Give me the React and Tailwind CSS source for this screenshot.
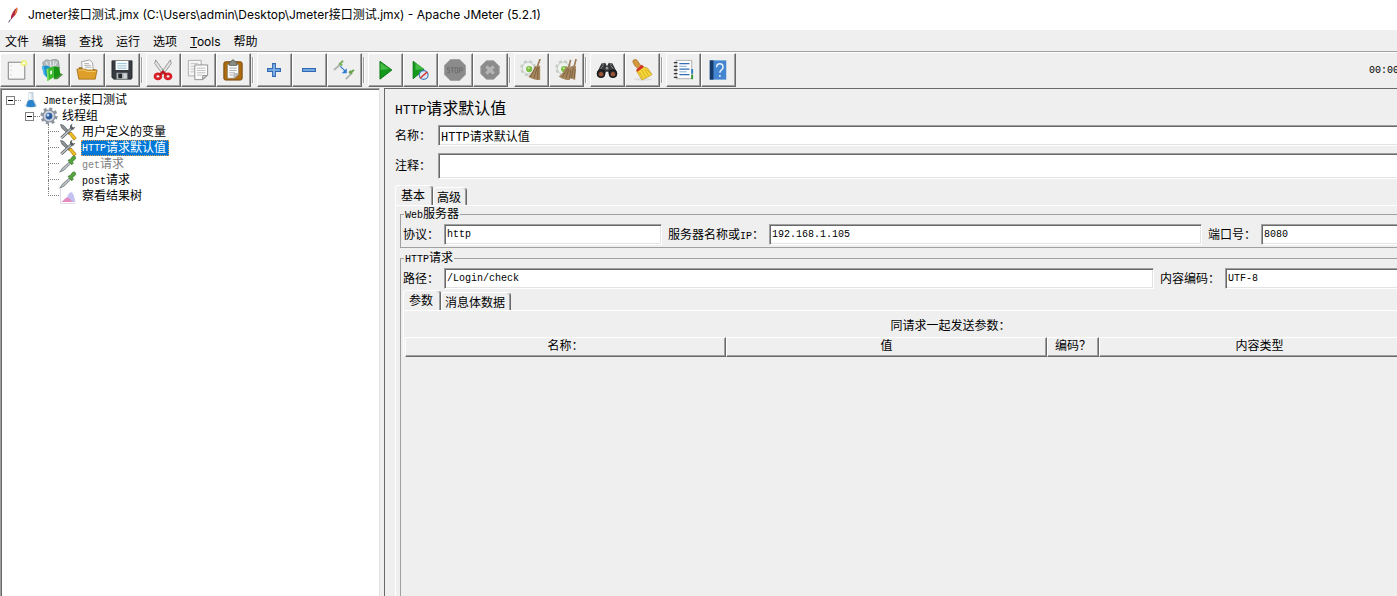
import React from "react";

const mono = "font-['Liberation_Mono','Noto_Sans_CJK_SC',monospace]";

/* Latin runs are set smaller so that two letters take the width of one ideograph. */
function Mixed({ text, large }) {
  return text.split(/([\x20-\x7e]+)/).filter(Boolean).map((part, i) =>
    /^[\x20-\x7e]/.test(part) ? (
      <span key={i} className={large ? `${mono} text-[13px]` : `${mono} text-[10px]`}>{part}</span>
    ) : (
      <span key={i}>{part}</span>
    )
  );
}

const Svg = ({ size = "size-[22px]", children }) => (
  <svg viewBox="0 0 24 24" className={`${size} shrink-0`} fill="none" aria-hidden="true">{children}</svg>
);

const NewIcon = () => (
  <Svg>
    <path d="M2.500 3.500h18v18.500h-18z" fill="#f8f8f8" stroke="#777" />
    <path d="M5.500 7v1M5.500 12v1M5.500 17v1" stroke="#bbb" />
    <circle cx="19.500" cy="4.500" r="3.500" fill="#eef56a" opacity=".8" />
    <circle cx="19.500" cy="4.500" r="1.300" fill="#fff" />
  </Svg>
);
const TemplatesIcon = () => (
  <Svg>
    <path d="M2 4c2-3 5-4 8-2 3-2 7-2 9 0l1 8H3z" fill="#b5bcbe" stroke="#7f8b8c" strokeWidth=".8" />
    <path d="M6 3l2 7M10 2l1 8M14 2l-1 8M17 3l-3 7" stroke="#eef1f1" />
    <path d="M1 8l6-1 3 2v12l-4-1-3-4z" fill="#1f8fd0" />
    <path d="M1 8l2-.5 2 12L3 17z" fill="#4bb8ea" />
    <path d="M20 15l4 2-6 5h-4z" fill="#4a8d3b" />
    <path d="M6 11l8-3v12l-7 4z" fill="#3bbb2b" />
    <path d="M14 8l6 1 1 8-7 5z" fill="#169312" />
    <path d="M6 11l2-.7.500 13L7 24z" fill="#81df64" />
    <path d="M10 13l2-.6v4l-2 .6z" fill="#eafbe5" />
  </Svg>
);
const OpenIcon = () => (
  <Svg>
    <path d="M3 9h6l1 2h11v10H3z" fill="#a86d0c" />
    <path d="M6 3l9-2 3 3 1 9H7z" fill="#fafafa" stroke="#8b8b8b" strokeWidth=".8" />
    <path d="M9 5h5M9 7h7M10 9h7" stroke="#999" strokeWidth=".8" />
    <path d="M1 11h9l2 1h11l-2 10H3z" fill="#dfa02b" stroke="#9b660f" strokeWidth=".8" />
    <path d="M2.500 12h7l2 1.500h10" stroke="#f5cf73" />
  </Svg>
);
const SaveIcon = () => (
  <Svg>
    <path d="M1 2h22v19l-1 1H3l-2-2z" fill="#363b41" stroke="#222" strokeWidth=".8" />
    <path d="M5 2h14v10H5z" fill="#f8fbfd" />
    <path d="M7 5h10M7 7.500h10M7 10h10" stroke="#8ebbd0" />
    <path d="M6 15h12v7H6z" fill="#aeb3b6" />
    <path d="M8 16h4v5H8z" fill="#25292d" />
    <path d="M14 16h3v5h-3z" fill="#d4d7d8" />
  </Svg>
);
const CutIcon = () => (
  <Svg>
    <path d="M4 1l10 14-2 2L3 5zM20 1L10 15l2 2 9-12z" fill="#e5e5e5" stroke="#888" strokeWidth=".9" />
    <ellipse cx="6.500" cy="19" rx="3.200" ry="2.700" stroke="#d81e26" strokeWidth="3" />
    <ellipse cx="17.500" cy="19" rx="3.200" ry="2.700" stroke="#d81e26" strokeWidth="3" />
    <path d="M8.500 17l3.500-3 3.500 3" stroke="#c5131b" strokeWidth="2.500" />
  </Svg>
);
const CopyIcon = () => (
  <Svg>
    <path d="M1.500 1.500h14v17h-14z" fill="#f5f5f5" stroke="#aaa" />
    <path d="M4 5h8M4 8h4M4 11h4M4 14h4" stroke="#c1c1c1" />
    <path d="M8.500 6.500h14v11l-5 5h-9z" fill="#fafafa" stroke="#8b8b8b" />
    <path d="M11 10h9M11 12.500h9M11 15h9M11 17.500h5" stroke="#bbb" />
    <path d="M22 18l-5 4v-4z" fill="#ccc" stroke="#777" strokeWidth=".7" />
  </Svg>
);
const PasteIcon = () => (
  <Svg>
    <rect x="2" y="3" width="20" height="20" rx="2" fill="#ad6b10" stroke="#744407" />
    <path d="M6 6h12v11l-4 4H6z" fill="#fafafa" stroke="#777" strokeWidth=".6" />
    <path d="M8 10h8M8 12.500h8M8 15h6M8 17.500h4" stroke="#aaa" />
    <path d="M18 16l-5 5v-5z" fill="#c8c8c8" stroke="#888" strokeWidth=".6" />
    <path d="M8 3h2l1-2h2l1 2h2v4H8z" fill="#8a8d84" stroke="#55584f" strokeWidth=".8" />
  </Svg>
);
const PlusIcon = () => (
  <Svg><path d="M10.500 5h3v5.500H19v3h-5.500V19h-3v-5.500H5v-3h5.500z" fill="#8dbbed" stroke="#2f69b3" strokeWidth="1.200" /></Svg>
);
const MinusIcon = () => (
  <Svg><path d="M5 10.500h14v3H5z" fill="#8dbbed" stroke="#2f69b3" strokeWidth="1.200" /></Svg>
);
const ToggleIcon = () => (
  <Svg>
    <path d="M1 12l7-6" stroke="#aab2ac" strokeWidth="1.800" />
    <path d="M6.500 6.500L11 2M7 4l3 3" stroke="#7fb166" strokeWidth="2.200" />
    <path d="M14 22l6-6" stroke="#aab2ac" strokeWidth="1.800" />
    <path d="M17.500 15.500L23 12M18 13l3 3" stroke="#6ba351" strokeWidth="2.200" />
    <path d="M8 8l5 5" stroke="#2c7ad2" strokeWidth="1.400" />
    <path d="M15 10v5.500H9.500z" fill="#2c7ad2" />
  </Svg>
);
const Play = ({ d }) => (
  <>
    <path d={d} fill="#15991d" stroke="#087311" />
    <path d="M7 4l10 7-10 1z" fill="#5dce59" opacity=".65" />
  </>
);
const StartIcon = () => <Svg><Play d="M6.500 2.500l13 9.500-13 10z" /></Svg>;
const StartNoPauseIcon = () => (
  <Svg>
    <Play d="M4.500 2.500l12 9-12 10z" />
    <circle cx="16" cy="17.500" r="4.800" fill="#dde6f2" stroke="#4b7dbb" strokeWidth="1.300" />
    <path d="M12 21l8-7" stroke="#d63b34" strokeWidth="1.600" />
  </Svg>
);
const StopIcon = () => (
  <Svg>
    <path d="M7 .5h10L23.500 7v10L17 23.500H7L.5 17V7z" fill="#8b8b8b" stroke="#a0a0a0" />
    <path d="M6 9.500H4v2.500h2V15H3.500M7 9.500h4M9 9.500V15M12 9.500h3V15h-3zM17 15V9.500h3v3h-3" stroke="#6b6b6b" />
  </Svg>
);
const ShutdownIcon = () => (
  <Svg>
    <path d="M8 2h8l6 6v8l-6 6H8l-6-6V8z" fill="#8b8b8b" stroke="#999" />
    <path d="M8 8l8 8M16 8l-8 8" stroke="#b5b5b5" strokeWidth="3.400" />
  </Svg>
);
const Gear = () => (
  <>
    <circle cx="9" cy="10" r="7" stroke="#c6cdc6" strokeWidth="3.500" strokeDasharray="3.200 2.300" />
    <circle cx="9" cy="10" r="6.500" fill="#eef1ee" stroke="#c3c9c3" />
    <circle cx="10" cy="11" r="3.400" fill="#79bd42" />
    <circle cx="9.500" cy="10" r="1.200" fill="#bce78b" />
  </>
);
const ClearIcon = () => (
  <Svg>
    <Gear />
    <path d="M22 0l-3 8" stroke="#9a7955" strokeWidth="1.800" />
    <path d="M16 8l6-1v16c-5 0-9-1-13-4 3-2 6-6 7-11z" fill="#a6875e" />
    <path d="M17 9l-6 11M19 9l-4 12M20 9l-1 13" stroke="#715334" strokeWidth=".8" />
  </Svg>
);
const ClearAllIcon = () => (
  <Svg>
    <Gear />
    <path d="M17 1l-2 8M23 0l-2 8" stroke="#9a7955" strokeWidth="1.800" />
    <path d="M12 8l4 1 4-2 3 1-1 15-5-2-1 2c-4 0-8-1-12-4 4-2 6-6 8-11z" fill="#a6875e" />
    <path d="M14 10L8 20M15 11l-3 10M17 12l-1 9M20 9l-2 12M22 11l-1 10" stroke="#715334" strokeWidth=".8" />
  </Svg>
);
const SearchIcon = () => (
  <Svg>
    <path d="M6 5l4-1 2 4 2-4 4 1 5 10-1 4h-6l-3-5h-2l-3 5H2l-1-4z" fill="#343638" />
    <path d="M7 6l2-1M15 5l2 1M5 11l3-4M19 11l-3-4" stroke="#8e9293" />
    <circle cx="5.500" cy="16" r="4.300" fill="#272727" stroke="#111" />
    <circle cx="18.500" cy="16" r="4.300" fill="#272727" stroke="#111" />
    <circle cx="5.500" cy="16.500" r="2.400" fill="#9d5537" />
    <circle cx="18.500" cy="16.500" r="2.400" fill="#9d5537" />
    <circle cx="12" cy="10" r="1.500" fill="#999" />
  </Svg>
);
const BroomIcon = () => (
  <Svg>
    <ellipse cx="13" cy="22" rx="10" ry="1.500" fill="#ddd" />
    <path d="M2 3c0-3 4-3 5-1l4 6-3 3-4-4z" fill="#d49a3c" stroke="#a4671c" strokeWidth=".8" />
    <path d="M12 8l6 2 5 7-11 6-6-10z" fill="#f4d63b" stroke="#c49a17" strokeWidth=".8" />
    <path d="M12 12l4 8M15 11l4 7M17 11l4 5M9 14l4 7" stroke="#d6ad1c" strokeWidth=".9" />
    <path d="M5.500 12L12 6l2 3-7 5z" fill="#d1332a" />
  </Svg>
);
const FunctionIcon = () => (
  <Svg>
    <path d="M4.500 1.500h17v20h-17z" fill="#fcfcfc" stroke="#aaa" />
    <path d="M8 5h11M8 11h11M8 17h11" stroke="#316eb4" strokeWidth="1.400" />
    <path d="M8 8h8M8 14h8" stroke="#7da6d1" />
    <path d="M2 4h4M2 8h4M2 12h4M2 16h4M2 20h4" stroke="#333" strokeWidth="1.500" />
    <path d="M21 11h2v5h-2z" fill="#287bc7" /><path d="M21 17h2v5h-2z" fill="#2f982d" />
  </Svg>
);
const HelpIcon = () => (
  <Svg>
    <path d="M3 1.500h18v21H3z" fill="#4385d0" />
    <path d="M3 1.500h4v21H3z" fill="#173a68" />
    <path d="M10.500 9c0-5 7-5 7 0 0 3-3.500 3-3.500 6M14 17.500v2" stroke="#e9f3fc" strokeWidth="1.600" />
  </Svg>
);

const toolGroups = [
  [["新建", NewIcon], ["模板", TemplatesIcon], ["打开", OpenIcon], ["保存", SaveIcon]],
  [["剪切", CutIcon], ["复制", CopyIcon], ["粘贴", PasteIcon]],
  [["展开", PlusIcon], ["折叠", MinusIcon], ["切换", ToggleIcon]],
  [["启动", StartIcon], ["不停顿开始", StartNoPauseIcon], ["停止", StopIcon], ["关闭", ShutdownIcon]],
  [["清除", ClearIcon], ["清除全部", ClearAllIcon]],
  [["搜索", SearchIcon], ["重置搜索", BroomIcon]],
  [["函数助手", FunctionIcon], ["帮助", HelpIcon]],
];

function Toolbar() {
  return (
    <div className="flex h-9 items-center border-t border-[#a0a0a0] shadow-[inset_0_1px_0_#fff]">
      {toolGroups.map((group, g) => (
        <div key={g} className="flex">
          {g > 0 && <div className="my-1 ml-px mr-[3px] w-0.5 border-l border-r border-l-[#a0a0a0] border-r-white" />}
          {group.map(([label, Icon]) => (
            <button
              key={label}
              aria-label={label}
              className="flex h-[34px] w-[35px] items-center justify-center border border-b-[#696969] border-l-white border-r-[#696969] border-t-white bg-[#efefef] pr-px pt-px shadow-[inset_-1px_-1px_0_#a0a0a0]"
            >
              <Icon />
            </button>
          ))}
        </div>
      ))}
      <span className={`ml-auto mr-[84px] pt-0.5 ${mono} text-[10px]`}>00:00:00</span>
    </div>
  );
}

const FlaskIcon = () => (
  <Svg size="size-4">
    <path d="M9 1h6v9l5 11c0 2-16 2-16 0l5-11z" fill="#dbe7ef" stroke="#9eb4c2" />
    <path d="M7 14l3-2h5l4 9c-1 2-13 2-14 0z" fill="#2c83cd" />
    <path d="M10 2v9" stroke="#fff" strokeWidth="2" />
  </Svg>
);
const GroupIcon = () => (
  <Svg size="size-[18px]">
    <circle cx="12" cy="12" r="9.500" stroke="#9097a1" strokeWidth="4" strokeDasharray="4 3.460" />
    <circle cx="12" cy="12" r="8" fill="#ccd2dc" stroke="#858d99" strokeWidth="1.500" />
    <circle cx="12" cy="12" r="4.500" fill="#315e9f" />
    <circle cx="10.500" cy="10.500" r="2" fill="#b9d4f3" />
  </Svg>
);
const ToolsIcon = () => (
  <Svg size="size-[18px]">
    <path d="M2 2l4 1 9 10-2 2L4 7z" fill="#8b9195" stroke="#5c6164" />
    <path d="M13 14l3-2 7 8-3 3z" fill="#edbd22" stroke="#a87a10" />
    <path d="M3 20L17 7" stroke="#555b5e" strokeWidth="4" />
    <path d="M3 20L17 7" stroke="#bfc5c8" strokeWidth="2" />
    <path d="M16 2c-3 3-1 8 3 7l3-4-3 1-2-2 1-3z" fill="#5c6265" />
  </Svg>
);
const DropperIcon = () => (
  <Svg size="size-[18px]">
    <path d="M1 23l3-5L14 9l2 2L7 20z" fill="#b6bec2" stroke="#6b7276" />
    <path d="M12 7l5 6 2-2-1-2 4-4c1-3-2-5-4-3l-3 4z" fill="#57a53c" stroke="#33752a" />
  </Svg>
);
const ResultIcon = () => (
  <Svg size="size-[18px]">
    <path d="M2 1v21h20" stroke="#d5cddd" />
    <path d="M8 20c2-3 4-13 8-13s5 11 6 13z" fill="#c3c0f2" />
    <path d="M3 20c3-1 5-6 8-6 4 0 4 5 9 6z" fill="#e58abf" />
  </Svg>
);

const Expander = () => (
  <button aria-label="折叠节点" className="flex size-[9px] shrink-0 items-center justify-center border border-[#808080] bg-white">
    <span className="h-px w-[5px] bg-black" />
  </button>
);

const leaves = [
  { text: "用户定义的变量", Icon: ToolsIcon },
  { text: "HTTP请求默认值", Icon: ToolsIcon, selected: true },
  { text: "get请求", Icon: DropperIcon, disabled: true },
  { text: "post请求", Icon: DropperIcon },
  { text: "察看结果树", Icon: ResultIcon },
];

function Tree() {
  return (
    <aside className="w-[380px] shrink-0 border border-b-0 border-l-[#a0a0a0] border-r-[#e3e3e3] border-t-[#a0a0a0] bg-white pl-px pt-[3px] shadow-[inset_1px_1px_0_#696969]">
      <ul className="text-[12px] leading-4">
        <li>
          <div className="flex h-4 items-center pl-1">
            <Expander />
            <span className="h-px w-[6px] border-t border-dotted border-[#808080]" />
            <span className="flex w-[20px] justify-center"><FlaskIcon /></span>
            <span className="ml-0.5 pt-0.5"><Mixed text="Jmeter接口测试" /></span>
          </div>
          <ul>
            <li>
              <div className="flex h-4 items-center pl-[23px]">
                <Expander />
                <span className="h-px w-[6px] border-t border-dotted border-[#808080]" />
                <GroupIcon />
                <span className="ml-1 pt-0.5">线程组</span>
              </div>
              <ul>
                {leaves.map(({ text, Icon, selected, disabled }, i) => (
                  <li key={text} className="flex h-4 items-center pl-[46px]">
                    <span className="flex h-4 w-[11px] flex-col">
                      <span className="h-2 border-b border-l border-dotted border-[#808080]" />
                      {i < leaves.length - 1 && <span className="h-2 border-l border-dotted border-[#808080]" />}
                    </span>
                    <Icon />
                    <span
                      className={
                        selected
                          ? "ml-1 flex h-4 items-center border border-dotted border-[#e0a050] bg-[#0078d7] pr-0.5 pt-px text-white"
                          : disabled
                          ? "ml-[5px] pt-0.5 text-[#808080]"
                          : "ml-[5px] pt-0.5"
                      }
                    >
                      <Mixed text={text} />
                    </span>
                  </li>
                ))}
              </ul>
            </li>
          </ul>
        </li>
      </ul>
    </aside>
  );
}

const sunken = "min-w-0 border border-b-white border-l-[#a0a0a0] border-r-white border-t-[#a0a0a0] bg-white px-0.5 outline-none shadow-[inset_1px_1px_0_#696969,inset_-1px_-1px_0_#e3e3e3]";

function Field({ id, label, value, grow, width, text = "text-[10px]", height = "h-[21px]", gap = "gap-[5px]" }) {
  return (
    <div className={`flex items-center ${gap} ${grow ? "min-w-0 flex-1" : "shrink-0"}`}>
      <label htmlFor={id} className="whitespace-nowrap pt-0.5"><Mixed text={label} /></label>
      <input id={id} defaultValue={value} className={`${sunken} ${mono} ${text} ${height} ${grow ? "flex-1" : width}`} />
    </div>
  );
}

function Group({ title, className, children }) {
  return (
    <fieldset className={`min-w-0 border border-[#a0a0a0] ${className}`}>
      <legend className="ml-px px-px pt-[3px] leading-4"><Mixed text={title} /></legend>
      {children}
    </fieldset>
  );
}

function Tabs({ names }) {
  return (
    <div role="tablist" className="flex h-5 items-end">
      {names.map((name, i) => (
        <button
          key={name}
          role="tab"
          aria-selected={i === 0}
          className={
            i === 0
              ? "flex h-5 items-center rounded-t-sm border-l border-r border-t border-l-white border-r-[#696969] border-t-white pl-[5px] pr-[7px] pt-[3px] shadow-[inset_-1px_0_0_#a0a0a0]"
              : "flex h-[18px] items-center rounded-t-sm border-l border-r border-t border-l-white border-r-[#696969] border-t-white pl-[3px] pr-[5px] pt-[5px] shadow-[inset_-1px_0_0_#a0a0a0]"
          }
        >
          {name}
        </button>
      ))}
    </div>
  );
}

const th = "h-5 border border-b-[#696969] border-l-white border-r-[#696969] border-t-white p-0 text-center font-normal leading-[18px] shadow-[inset_-1px_-1px_0_#a0a0a0]";

function Editor() {
  return (
    <main className="flex min-w-0 flex-1 flex-col border-l border-t border-[#696969] pl-[10px] pr-[3px] pt-[9px]">
      <h1 className="mb-0.5 text-[16px] leading-6"><Mixed text="HTTP请求默认值" large /></h1>
      <div className="mb-[7px] flex"><Field id="name" label="名称：" value="HTTP请求默认值" grow text="text-[12px]" gap="gap-[7px]" /></div>
      <div className="mb-[6px] flex"><Field id="comment" label="注释：" value="" grow height="h-[26px]" gap="gap-[7px]" /></div>
      <Tabs names={["基本", "高级"]} />
      <div className="flex flex-1 flex-col border-l border-t border-white pl-1">
        <Group title="Web服务器" className="-mt-0.5 pb-0.5 pl-0.5 pr-1">
          <div className="flex items-center gap-[6px]">
            <Field id="protocol" label="协议：" value="http" width="w-[218px]" />
            <Field id="server" label="服务器名称或IP：" value="192.168.1.105" grow />
            <Field id="port" label="端口号：" value="8080" width="w-[232px]" />
          </div>
        </Group>
        <Group title="HTTP请求" className="flex flex-1 flex-col border-b-0 pl-0.5 pr-px">
          <div className="mb-px flex items-center gap-[6px]">
            <Field id="path" label="路径：" value="/Login/check" grow />
            <Field id="encoding" label="内容编码：" value="UTF-8" width="w-[271px]" />
          </div>
          <Tabs names={["参数", "消息体数据"]} />
          <div className="border-l border-t border-white pl-px">
            <p className="pb-px pt-[7px] text-center leading-[18px]">同请求一起发送参数：</p>
            <div className="pr-[76px]">
              <table className="w-full table-fixed border-separate border-spacing-0">
                <thead>
                  <tr>
                    <th className={th}>名称：</th>
                    <th className={th}>值</th>
                    <th className={`${th} w-[52px]`}>编码？</th>
                    <th className={th}>内容类型</th>
                  </tr>
                </thead>
              </table>
            </div>
          </div>
        </Group>
      </div>
    </main>
  );
}

const menus = ["文件", "编辑", "查找", "运行", "选项", "Tools", "帮助"];

export default function App() {
  return (
    <div className="min-h-screen overflow-hidden bg-[#efefef] font-['Liberation_Mono','Noto_Sans_CJK_SC',monospace] text-[12px] text-black">
      <div className="flex min-h-screen w-[calc(100%+104px)] flex-col">
        <header className="flex h-[30px] items-center bg-white pl-[5px] font-['Inter','Noto_Sans_CJK_SC',sans-serif] text-[12px]">
          <Svg size="size-[18px]">
            <path d="M8 17c-1-5 4-12 8-15 2 3-1 11-8 15z" fill="#d22e35" />
            <path d="M12 7c2-3 3-4 4-5 1 4-1 7-2 9z" fill="#e37b35" />
            <path d="M14 4L8 18" stroke="#83255f" strokeWidth="1.300" />
            <path d="M7 18l-2 4" stroke="#4d4d64" strokeWidth="1.300" />
          </Svg>
          <span className="ml-[5px] whitespace-nowrap">Jmeter接口测试.jmx (C:\Users\admin\Desktop\Jmeter接口测试.jmx) - Apache JMeter (5.2.1)</span>
        </header>
        <nav className="flex h-[21px] items-center gap-[13px] pl-[5px] pt-0.5 font-['Inter','Noto_Sans_CJK_SC',sans-serif] text-[12px]">
          {menus.map((m) => (
            <button key={m}>{m === "Tools" ? <><u>T</u>ools</> : m}</button>
          ))}
        </nav>
        <Toolbar />
        <div className="flex flex-1 gap-1 pt-px">
          <Tree />
          <Editor />
        </div>
      </div>
    </div>
  );
}
